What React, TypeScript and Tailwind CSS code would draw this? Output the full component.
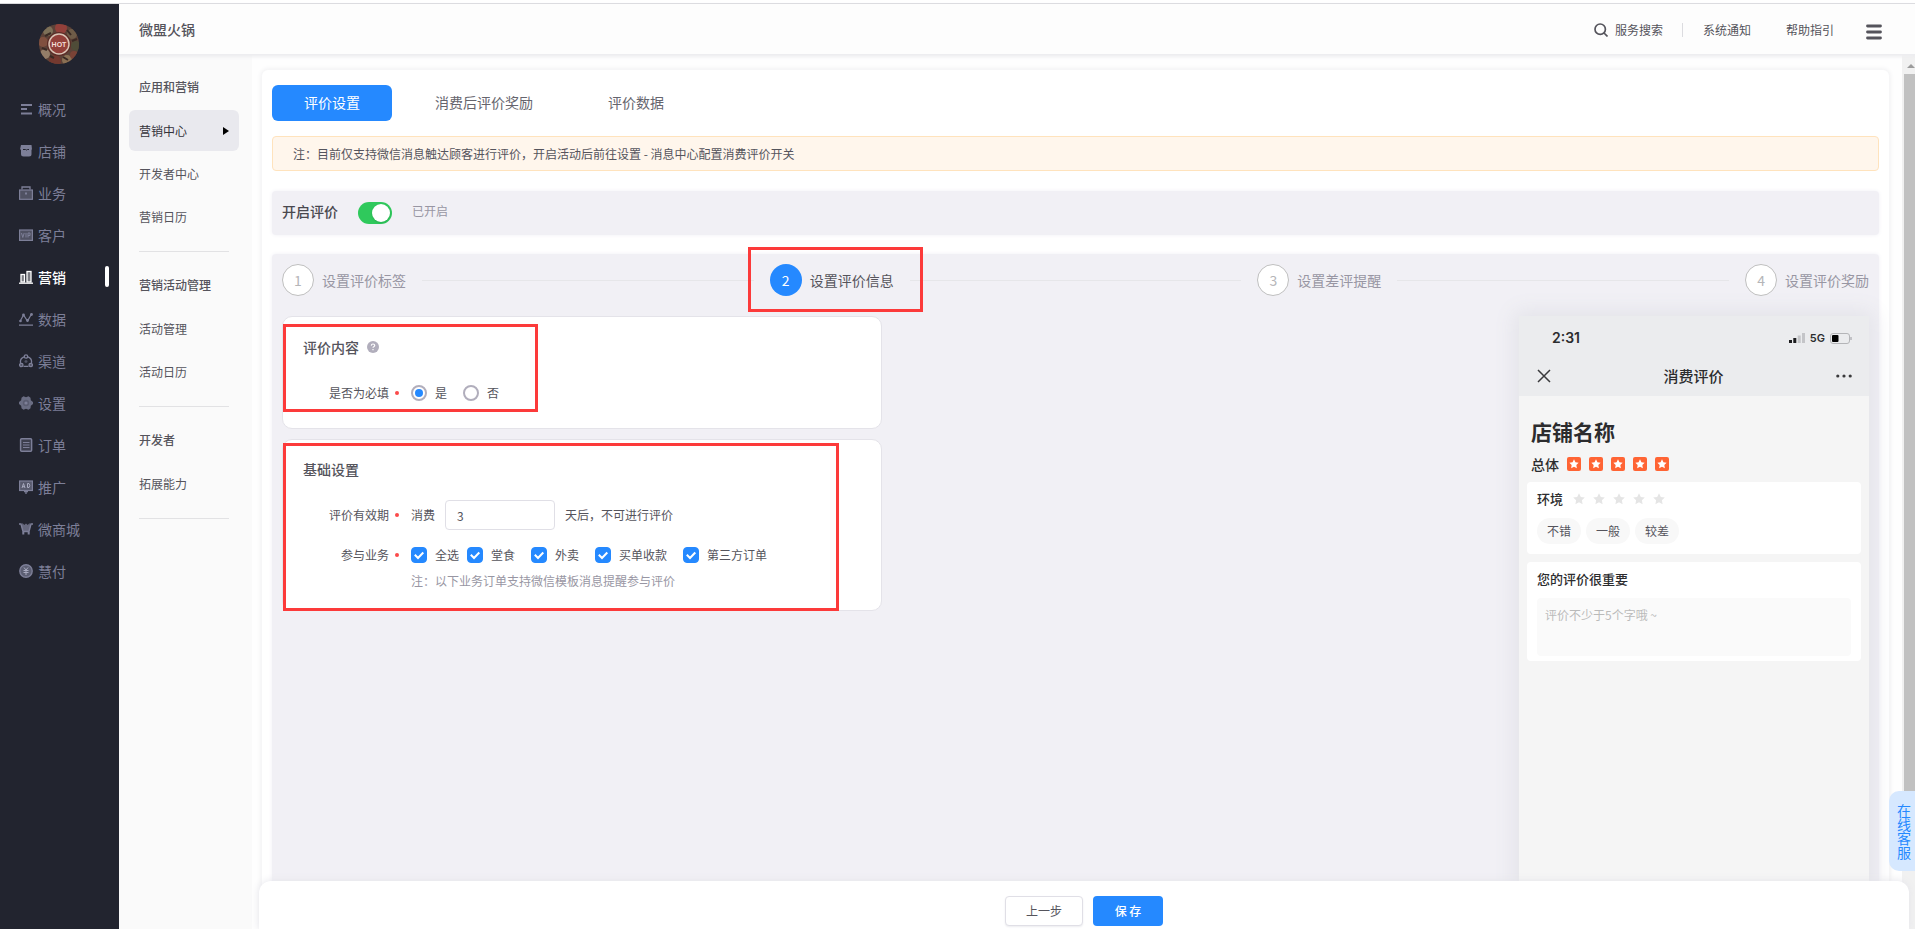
import React, { useState } from "react";

type NavItem = {
    label: string;
    icon: React.ReactNode;
};

const navItems: NavItem[] = [
    {
        label: "概况",
        icon: <path d="M2 2h11v2H2zM2 6h6v2H2zM2 10.500h11v2H2z" fill="currentColor" />,
    },
    {
        label: "店铺",
        icon: (
            <>
                <path d="M2 1h10.500L13 5.500H1z" fill="currentColor" />
                <path d="M2 5h10.500v5a2.500 2.500 0 0 1-2.500 2.500H4.500A2.500 2.500 0 0 1 2 10z" fill="currentColor" />
                <path d="M4 5.500h2.500q1 1 2 0H10" stroke="#22242f" fill="none" />
            </>
        ),
    },
    {
        label: "业务",
        icon: (
            <>
                <path d="M3 3.500V1h8v2.500" fill="none" stroke="currentColor" strokeWidth="1.300" />
                <rect x="0.600" y="4" width="12.800" height="9.300" fill="currentColor" fillOpacity="0.500" stroke="currentColor" strokeWidth="1.200" />
                <rect x="6" y="6.500" width="2" height="2" fill="currentColor" />
            </>
        ),
    },
    {
        label: "客户",
        icon: (
            <>
                <rect x="0.600" y="2" width="12.800" height="10.400" fill="currentColor" fillOpacity="0.500" stroke="currentColor" strokeWidth="1.200" />
                <path d="M2.500 5l1.300 4.500L5.200 5M7 5v4.500M9 9.500V5h2v2.500H9" fill="none" stroke="currentColor" />
            </>
        ),
    },
    {
        label: "营销",
        icon: (
            <>
                <path d="M0 13.200h14" stroke="currentColor" strokeWidth="1.300" />
                <rect x="2" y="4.500" width="3.500" height="7.500" fill="currentColor" fillOpacity="0.400" stroke="currentColor" strokeWidth="1.300" />
                <rect x="8" y="1.500" width="4" height="10.500" fill="currentColor" fillOpacity="0.400" stroke="currentColor" strokeWidth="1.300" />
            </>
        ),
    },
    {
        label: "数据",
        icon: (
            <>
                <path d="M0 13.200h14M1 9.500L4.500 3l4 6L12.500 2" fill="none" stroke="currentColor" strokeWidth="1.200" />
                <circle cx="1.500" cy="9" r="1.300" fill="currentColor" />
                <circle cx="4.500" cy="3" r="1.400" fill="currentColor" />
                <circle cx="8.500" cy="8.500" r="1.400" fill="currentColor" />
                <circle cx="12.500" cy="2.500" r="1.400" fill="currentColor" />
            </>
        ),
    },
    {
        label: "渠道",
        icon: (
            <g fill="none" stroke="currentColor" strokeWidth="1.300">
                <path d="M5 2.800A5.500 5.500 0 0 0 1.600 9M9 2.800A5.500 5.500 0 0 1 12.400 9M4.500 12.300h5" />
                <circle cx="7" cy="2.500" r="1.700" />
                <circle cx="2.300" cy="11" r="1.700" fill="currentColor" fillOpacity="0.500" />
                <circle cx="11.700" cy="11" r="1.700" fill="currentColor" fillOpacity="0.500" />
                <path d="M7 6v3M5.500 7.500h3" strokeOpacity="0.500" />
            </g>
        ),
    },
    {
        label: "设置",
        icon: (
            <>
                <path d="M4.500.3l2.500 1 2.500-1 2 1.500.3 2.500L14 6v2l-2.200 1.700-.3 2.500-2 1.500-2.500-1-2.500 1-2-1.500-.3-2.500L0 8V6l2.200-1.700.3-2.500z" fill="currentColor" fillOpacity="0.800" />
                <circle cx="7" cy="7" r="3.200" fill="#5b5d72" />
                <circle cx="7" cy="7" r="1.600" fill="currentColor" />
            </>
        ),
    },
    {
        label: "订单",
        icon: (
            <>
                <rect x="1.600" y="0.800" width="11" height="12.400" rx="1" fill="currentColor" fillOpacity="0.300" stroke="currentColor" strokeWidth="1.500" />
                <path d="M4 4.500h6.500M4 7h6.500M4 9.500h6.500" stroke="currentColor" strokeWidth="1.200" />
            </>
        ),
    },
    {
        label: "推广",
        icon: (
            <>
                <rect x="0.600" y="1" width="12.800" height="9.500" fill="currentColor" fillOpacity="0.600" stroke="currentColor" strokeWidth="1.200" />
                <path d="M3 8l1.500-4.500L6 8M3.500 6.700h2M8.500 3.500v4H10q1.500-2 0-4z" fill="none" stroke="#a9abc0" />
                <path d="M7 10v4M5 11.500h4" stroke="currentColor" strokeWidth="1.300" />
            </>
        ),
    },
    {
        label: "微商城",
        icon: (
            <>
                <path d="M0 2h2l2 7.500h6L12 2h2" fill="none" stroke="currentColor" strokeWidth="1.400" />
                <path d="M2.500 5l1-4 1.700 2L7 1.500 8.800 3l1.700-2 1 4L10 9H4z" fill="currentColor" fillOpacity="0.750" />
                <path d="M4.300 10v2.500M9.700 10v2.500" stroke="currentColor" strokeWidth="2" />
            </>
        ),
    },
    {
        label: "慧付",
        icon: (
            <>
                <circle cx="7" cy="7" r="6.200" fill="currentColor" fillOpacity="0.650" stroke="currentColor" strokeWidth="1.400" />
                <path d="M5 3.500l2 2.500 2-2.500M4.500 6.500h5M4.500 8.500h5M7 6v5" fill="none" stroke="#a9abc0" />
            </>
        ),
    },
];

const menuGroups = [
    { title: "应用和营销", items: ["营销中心", "开发者中心", "营销日历"] },
    { title: "营销活动管理", items: ["活动管理", "活动日历"] },
    { title: "开发者", items: ["拓展能力"] },
];

const tabs = ["评价设置", "消费后评价奖励", "评价数据"];
const steps = ["设置评价标签", "设置评价信息", "设置差评提醒", "设置评价奖励"];
const services = ["堂食", "外卖", "买单收款", "第三方订单"];

const STAR = "M7 1.200l1.800 3.700 4 .5-2.900 2.800.7 4L7 10.300l-3.600 1.900.7-4L1.200 5.400l4-.5z";

const Logo = () => (
    <svg viewBox="0 0 40 40" className="size-10 rounded-full" role="img" aria-label="HOT">
        <rect width="40" height="40" fill="#5c4238" />
        <circle cx="9" cy="7" r="5" fill="#7d7058" />
        <circle cx="22" cy="4" r="6" fill="#93403a" />
        <circle cx="33" cy="10" r="5" fill="#6e5c48" />
        <circle cx="4" cy="18" r="5" fill="#80503f" />
        <circle cx="37" cy="22" r="5" fill="#4f4c38" />
        <circle cx="6" cy="30" r="5" fill="#937d68" />
        <circle cx="16" cy="37" r="6" fill="#74392f" />
        <circle cx="28" cy="36" r="5" fill="#8a7054" />
        <circle cx="35" cy="31" r="4" fill="#7a4336" />
        <path d="M6 12l6-3M28 6l4 5M33 17l5-2M3 24l5 2M11 32l4 2M24 33l5 3" stroke="#3a2a24" strokeWidth="2" />
        <circle cx="20" cy="20" r="12" fill="#5b2c26" />
        <circle cx="20" cy="20" r="10" fill="#93403a" stroke="#d9c3b4" strokeWidth="1.500" />
        <text x="20" y="23" textAnchor="middle" fontSize="7" fontWeight="700" fill="#f3dfd8" fontFamily="Liberation Sans, sans-serif">HOT</text>
    </svg>
);

const Sidebar = () => (
    <aside className="relative z-20 w-[119px] shrink-0 bg-[#22242f]">
        <div className="pt-5 pb-6 pl-[39px]">
            <Logo />
        </div>
        <nav>
            {navItems.map(({ label, icon }) => {
                const active = label === "营销";
                return (
                    <a
                        key={label}
                        href="#"
                        className={`flex h-[42px] items-center pr-[10px] pb-px pl-[19px] text-sm ${active ? "font-medium text-white" : "text-[#7d7f98]"}`}
                    >
                        <svg viewBox="0 0 14 14" className="mr-[5px] size-[14px]">{icon}</svg>
                        {label}
                        {active && <span className="ml-auto h-[21px] w-1 rounded-sm bg-white" />}
                    </a>
                );
            })}
        </nav>
    </aside>
);

const Header = () => (
    <header className="z-10 flex h-[50px] shrink-0 items-center justify-between bg-[#fdfdfd] pr-[33px] pb-px pl-5 text-xs text-[#55545c] shadow-[0_2px_3px_1px_#ededf0]">
        <h1 className="text-sm font-medium">微盟火锅</h1>
        <div className="flex items-center pt-[3px]">
            <button className="flex items-center gap-[7px]">
                <svg viewBox="0 0 14 14" className="size-[14px]" fill="none" stroke="currentColor" strokeWidth="1.700">
                    <circle cx="6.200" cy="6.200" r="5.200" />
                    <path d="M10 10l3.500 3.500" />
                </svg>
                服务搜索
            </button>
            <span className="mr-5 ml-[19px] h-[14px] w-px bg-[#dcdce0]" />
            <a href="#">系统通知</a>
            <a href="#" className="ml-[35px]">帮助指引</a>
            <button className="ml-8 pt-[3px]" aria-label="菜单">
                <svg viewBox="0 0 16 16" className="size-4" stroke="currentColor" strokeWidth="2.800" strokeLinecap="round">
                    <path d="M1.500 2h13M1.500 8h13M1.500 14h13" />
                </svg>
            </button>
        </div>
    </header>
);

const SubMenu = () => (
    <nav className="w-[133px] shrink-0 bg-[#fafafa] pt-3 pr-[13px] pl-[10px] text-xs text-[#55545c]">
        {menuGroups.map((group) => (
            <section key={group.title} className="pb-3">
                <h2 className="px-[10px] pt-[11px] pb-[13px] leading-5 font-medium">{group.title}</h2>
                {group.items.map((item) => {
                    const active = item === "营销中心";
                    return (
                        <a
                            key={item}
                            href="#"
                            className={`mb-[2px] flex h-[41px] items-center justify-between rounded-md px-[10px] ${active ? "bg-[#e9e9ee] text-[#33323a]" : ""}`}
                        >
                            {item}
                            {active && (
                                <svg viewBox="0 0 6 8" className="h-2 w-[6px]"><path d="M0 0l6 4-6 4z" fill="#000" /></svg>
                            )}
                        </a>
                    );
                })}
                <hr className="mx-[10px] mt-[14px] border-[#e2e2e4]" />
            </section>
        ))}
    </nav>
);

const Highlight = ({ className }: { className: string }) => (
    <span className={`pointer-events-none absolute border-[3px] border-[#fc3a3a] ${className}`} />
);

const Steps = () => (
    <ol className="flex items-center text-sm">
        {steps.map((step, i) => {
            const active = i === 1;
            const last = i === steps.length - 1;
            return (
                <li key={step} className={`relative flex items-center ${last ? "" : "flex-1"}`}>
                    <span
                        className={`mr-2 flex size-8 items-center justify-center rounded-full ${active ? "bg-[#2589ff] text-white" : "border border-[#bfbfbf] bg-white text-[#b5b5b8]"}`}
                    >
                        {i + 1}
                    </span>
                    <span className={active ? "text-[#55545c]" : "text-[#9896a3]"}>{step}</span>
                    {!last && <span className="mx-4 h-px flex-1 bg-[#e6e6e9]" />}
                    {active && <Highlight className="-top-[17px] -left-[22px] h-[65px] w-[175px]" />}
                </li>
            );
        })}
    </ol>
);

const FieldLabel = ({ children }: { children: React.ReactNode }) => (
    <span className="mr-3 flex w-24 items-center justify-end gap-[6px]">
        {children}
        <i className="size-1 rounded-full bg-[#fb4a4a]" />
    </span>
);

const Radio = ({ label, defaultChecked }: { label: string; defaultChecked?: boolean }) => (
    <label className="mr-4 flex items-center gap-2">
        <input
            type="radio"
            name="required"
            defaultChecked={defaultChecked}
            className="size-4 appearance-none rounded-full border-2 border-[#b1aebc] bg-white bg-clip-content p-[2px] checked:bg-[#2589ff]"
        />
        {label}
    </label>
);

const Checkbox = ({ label, checked, onChange }: { label: string; checked: boolean; onChange: () => void }) => (
    <label className="flex items-center gap-2">
        <span className="grid size-4">
            <input
                type="checkbox"
                checked={checked}
                onChange={onChange}
                className="col-start-1 row-start-1 size-4 appearance-none rounded border border-[#b1aebc] bg-white checked:border-[#2589ff] checked:bg-[#2589ff]"
            />
            <svg viewBox="0 0 16 16" className="pointer-events-none col-start-1 row-start-1 size-4" fill="none" stroke="#fff" strokeWidth="2">
                <path d="M3.800 7.800l3.200 3.200 5.300-5.500" />
            </svg>
        </span>
        {label}
    </label>
);

const SettingsForm = () => {
    const [days, setDays] = useState("3");
    const [selected, setSelected] = useState<string[]>(services);

    const toggleService = (name: string) => {
        setSelected((prev) => prev.includes(name) ? prev.filter((s) => s !== name) : [...prev, name]);
    }

    const allSelected = selected.length === services.length;

    return (
        <div className="w-[600px] space-y-[10px] text-xs text-[#55545c]">
            <section className="relative rounded-[10px] border border-[#e4e3e9] bg-white px-5 pt-[19px] pb-5">
                <h2 className="flex items-center gap-2 text-sm leading-[22px] font-medium">
                    评价内容
                    <svg viewBox="0 0 12 12" className="size-3">
                        <circle cx="6" cy="6" r="6" fill="#b1aebc" />
                        <path d="M4.300 4.600q.1-1.600 1.700-1.600t1.700 1.400q0 .8-1 1.300-.7.400-.7 1.100M6 8v1.200" fill="none" stroke="#fff" strokeWidth="1.200" />
                    </svg>
                </h2>
                <div className="mt-5 flex h-[30px] items-center">
                    <FieldLabel>是否为必填</FieldLabel>
                    <Radio label="是" defaultChecked />
                    <Radio label="否" />
                </div>
                <Highlight className="top-[7px] left-0 h-[88px] w-[255px]" />
            </section>

            <section className="relative rounded-[10px] border border-[#e4e3e9] bg-white px-5 pt-[18px] pb-[18px]">
                <h2 className="text-sm leading-[22px] font-medium">基础设置</h2>
                <label className="mt-5 flex h-[30px] items-center">
                    <FieldLabel>评价有效期</FieldLabel>
                    消费
                    <input
                        type="text"
                        value={days}
                        onChange={(e) => setDays(e.target.value)}
                        className="mx-[10px] h-[30px] w-[110px] rounded border border-[#e0dfe6] px-[11px]"
                    />
                    天后，不可进行评价
                </label>
                <div className="mt-[10px] flex h-[30px] items-center">
                    <FieldLabel>参与业务</FieldLabel>
                    <Checkbox
                        label="全选"
                        checked={allSelected}
                        onChange={() => setSelected(allSelected ? [] : services)}
                    />
                    <div className="ml-2 flex gap-4">
                        {services.map((name) => (
                            <Checkbox
                                key={name}
                                label={name}
                                checked={selected.includes(name)}
                                onChange={() => toggleService(name)}
                            />
                        ))}
                    </div>
                </div>
                <p className="mt-px pb-px pl-[108px] leading-5 text-[#9896a3]">注：以下业务订单支持微信模板消息提醒参与评价</p>
                <Highlight className="top-[3px] left-0 h-[168px] w-[556px]" />
            </section>
        </div>
    );
};

const PhonePreview = () => (
    <div className="w-[350px] bg-[#f5f5f5] text-[#2c2c2e] shadow-[0_0_20px_4px_#e2e2e8]">
        <div className="h-20 bg-[#ebecee] pt-3">
            <div className="flex h-5 items-center pr-[17px] pl-[33px]">
                <span className="font-['Inter',sans-serif] text-sm leading-5 font-semibold">2:31</span>
                <svg viewBox="0 0 16 10" className="ml-auto h-[10px] w-4">
                    <path d="M0 7h3v3H0zM4.300 5h3v5h-3z" fill="#1c1c1e" />
                    <path d="M8.700 2.500h3V10h-3zM13 0h3v10h-3z" fill="#c4c5c8" />
                </svg>
                <span className="mx-[5px] font-['Inter',sans-serif] text-[11px] font-semibold">5G</span>
                <svg viewBox="0 0 22 11" className="h-[11px] w-[22px]">
                    <rect x="0.500" y="0.500" width="19" height="10" rx="2.500" fill="none" stroke="#b4b5b8" />
                    <rect x="2" y="2" width="6.500" height="7" rx="1" fill="#000" />
                    <path d="M21 4v3" stroke="#b4b5b8" strokeWidth="1.500" />
                </svg>
            </div>
            <div className="mt-4 flex h-6 items-center justify-between pr-[17px] pl-[18px]">
                <svg viewBox="0 0 14 14" className="size-[14px]" stroke="#3a3a3c" strokeWidth="1.500">
                    <path d="M1 1l12 12M13 1L1 13" />
                </svg>
                <span className="text-[15px] font-medium">消费评价</span>
                <svg viewBox="0 0 16 4" className="h-1 w-4" fill="#3a3a3c">
                    <circle cx="1.800" cy="2" r="1.600" />
                    <circle cx="8" cy="2" r="1.600" />
                    <circle cx="14.200" cy="2" r="1.600" />
                </svg>
            </div>
        </div>
        <div className="px-2">
            <h3 className="px-1 pt-[19px] text-[21px] leading-8 font-bold">店铺名称</h3>
            <div className="mt-[7px] mb-2 flex h-5 items-center gap-2 px-1 text-sm font-medium">
                总体
                {[1, 2, 3, 4, 5].map((n) => (
                    <svg key={n} viewBox="0 0 14 14" className="size-[14px]">
                        <rect width="14" height="14" rx="2" fill="#ff6434" />
                        <path d={STAR} fill="#fff" transform="translate(1.400 1.400) scale(0.800)" />
                    </svg>
                ))}
            </div>
            <section className="rounded bg-white p-[10px] pt-[7px]">
                <div className="flex h-5 items-center gap-2 text-[13px] font-medium">
                    <span className="mr-[2px]">环境</span>
                    {[1, 2, 3, 4, 5].map((n) => (
                        <svg key={n} viewBox="1 1 12 12" className="size-3"><path d={STAR} fill="#e5e5e5" /></svg>
                    ))}
                </div>
                <div className="mt-[9px] flex gap-[5px] text-xs text-[#55545c]">
                    {["不错", "一般", "较差"].map((tag) => (
                        <button key={tag} className="h-[26px] w-11 rounded-full bg-[#f8f8f8]">{tag}</button>
                    ))}
                </div>
            </section>
            <section className="mt-2 rounded bg-white px-[10px] pt-[7px] pb-[5px]">
                <label htmlFor="comment" className="block text-[13px] leading-5 font-medium">您的评价很重要</label>
                <textarea
                    id="comment"
                    placeholder="评价不少于5个字哦 ~"
                    className="mt-[9px] block h-[58px] w-full resize-none rounded bg-[#fafafa] px-2 py-[7px] text-xs leading-5 placeholder:text-[#bababa]"
                />
            </section>
        </div>
    </div>
);

const Scrollbar = () => (
    <div className="flex w-[13px] shrink-0 flex-col bg-[#f1f1f1]" aria-hidden="true">
        <svg viewBox="0 0 13 20" className="h-5 w-[13px]"><path d="M5 14h8L9 10z" fill="#9c9c9c" /></svg>
        <div className="ml-[2px] h-[88%] bg-[#c1c1c1]" />
    </div>
);

export default function App() {
    const [tab, setTab] = useState(tabs[0]);
    const [enabled, setEnabled] = useState(true);

    return (
        <div className="flex h-screen flex-col overflow-hidden bg-white pt-[3px] font-['Noto_Sans_CJK_SC',sans-serif]">
            <div className="flex min-h-0 flex-1 border-t border-[#d9d9dc]">
                <Sidebar />
                <div className="flex min-w-0 flex-1 flex-col">
                    <Header />
                    <div className="relative flex min-h-0 flex-1">
                        <SubMenu />
                        <main className="flex min-w-0 flex-1 bg-[#fefefe] pt-4 pr-[13px] pl-[10px]">
                            <div className="flex min-w-0 flex-1 flex-col rounded-t-md bg-white px-[10px] pt-[15px] shadow-[0_0_5px_1px_#efeff1]">
                                <div className="flex gap-[11px] text-sm" role="tablist">
                                    {tabs.map((name) => (
                                        <button
                                            key={name}
                                            role="tab"
                                            aria-selected={tab === name}
                                            onClick={() => setTab(name)}
                                            className={`h-9 rounded-md px-8 pb-[2px] ${tab === name ? "bg-[#2589ff] text-white" : "text-[#66656e]"}`}
                                        >
                                            {name}
                                        </button>
                                    ))}
                                </div>
                                <p className="mt-[15px] rounded border border-[#ffe3bd] bg-[#fff6ec] px-5 py-[7px] text-xs leading-[19px] text-[#55545c]">
                                    注：目前仅支持微信消息触达顾客进行评价，开启活动后前往设置 - 消息中心配置消费评价开关
                                </p>
                                <div className="mt-5 flex h-[44px] shrink-0 items-center rounded bg-[#f1f0f5] px-[10px] shadow-[0_0_4px_#f1f0f5]">
                                    <label htmlFor="enable-review" className="pb-1 text-sm font-medium text-[#4a4950]">开启评价</label>
                                    <input
                                        id="enable-review"
                                        type="checkbox"
                                        role="switch"
                                        checked={enabled}
                                        onChange={() => setEnabled(!enabled)}
                                        className="mr-5 ml-5 h-[22px] w-[34px] appearance-none rounded-full bg-[#c5c4cc] p-[2px] before:block before:size-[18px] before:rounded-full before:bg-white before:shadow checked:bg-[#2fc95c] checked:before:ml-auto"
                                    />
                                    <span className="pb-1 text-xs text-[#9896a3]">{enabled ? "已开启" : "未开启"}</span>
                                </div>
                                <div className="mt-[19px] flex min-h-0 flex-1 flex-col rounded-t bg-[#f1f0f5] px-[10px] pt-[10px] shadow-[0_0_4px_#f1f0f5]">
                                    <Steps />
                                    <div className="mt-5 flex min-h-0 flex-1 justify-between">
                                        <SettingsForm />
                                        <PhonePreview />
                                    </div>
                                </div>
                            </div>
                        </main>
                        <Scrollbar />
                        <footer className="absolute right-[6px] bottom-0 left-[140px] flex h-12 items-start justify-center gap-[10px] rounded-t-xl bg-white pt-[15px] text-xs shadow-[0_0_8px_#e4e4ea]">
                            <button className="h-[30px] w-[78px] rounded border border-[#e0dfe6] bg-white text-[#55545c] shadow-[0_1px_2px_#ececf0]">上一步</button>
                            <button className="h-[30px] w-[70px] rounded bg-[#2589ff] font-medium text-white">保 存</button>
                        </footer>
                        <button className="absolute right-0 bottom-[58px] flex h-20 w-[26px] items-center rounded-l-[10px] bg-[#d6e8ff] pl-2 text-left text-sm leading-[14px] text-[#2589ff]">
                            <span className="w-[14px] break-all">在线客服</span>
                        </button>
                    </div>
                </div>
            </div>
        </div>
    );
}
